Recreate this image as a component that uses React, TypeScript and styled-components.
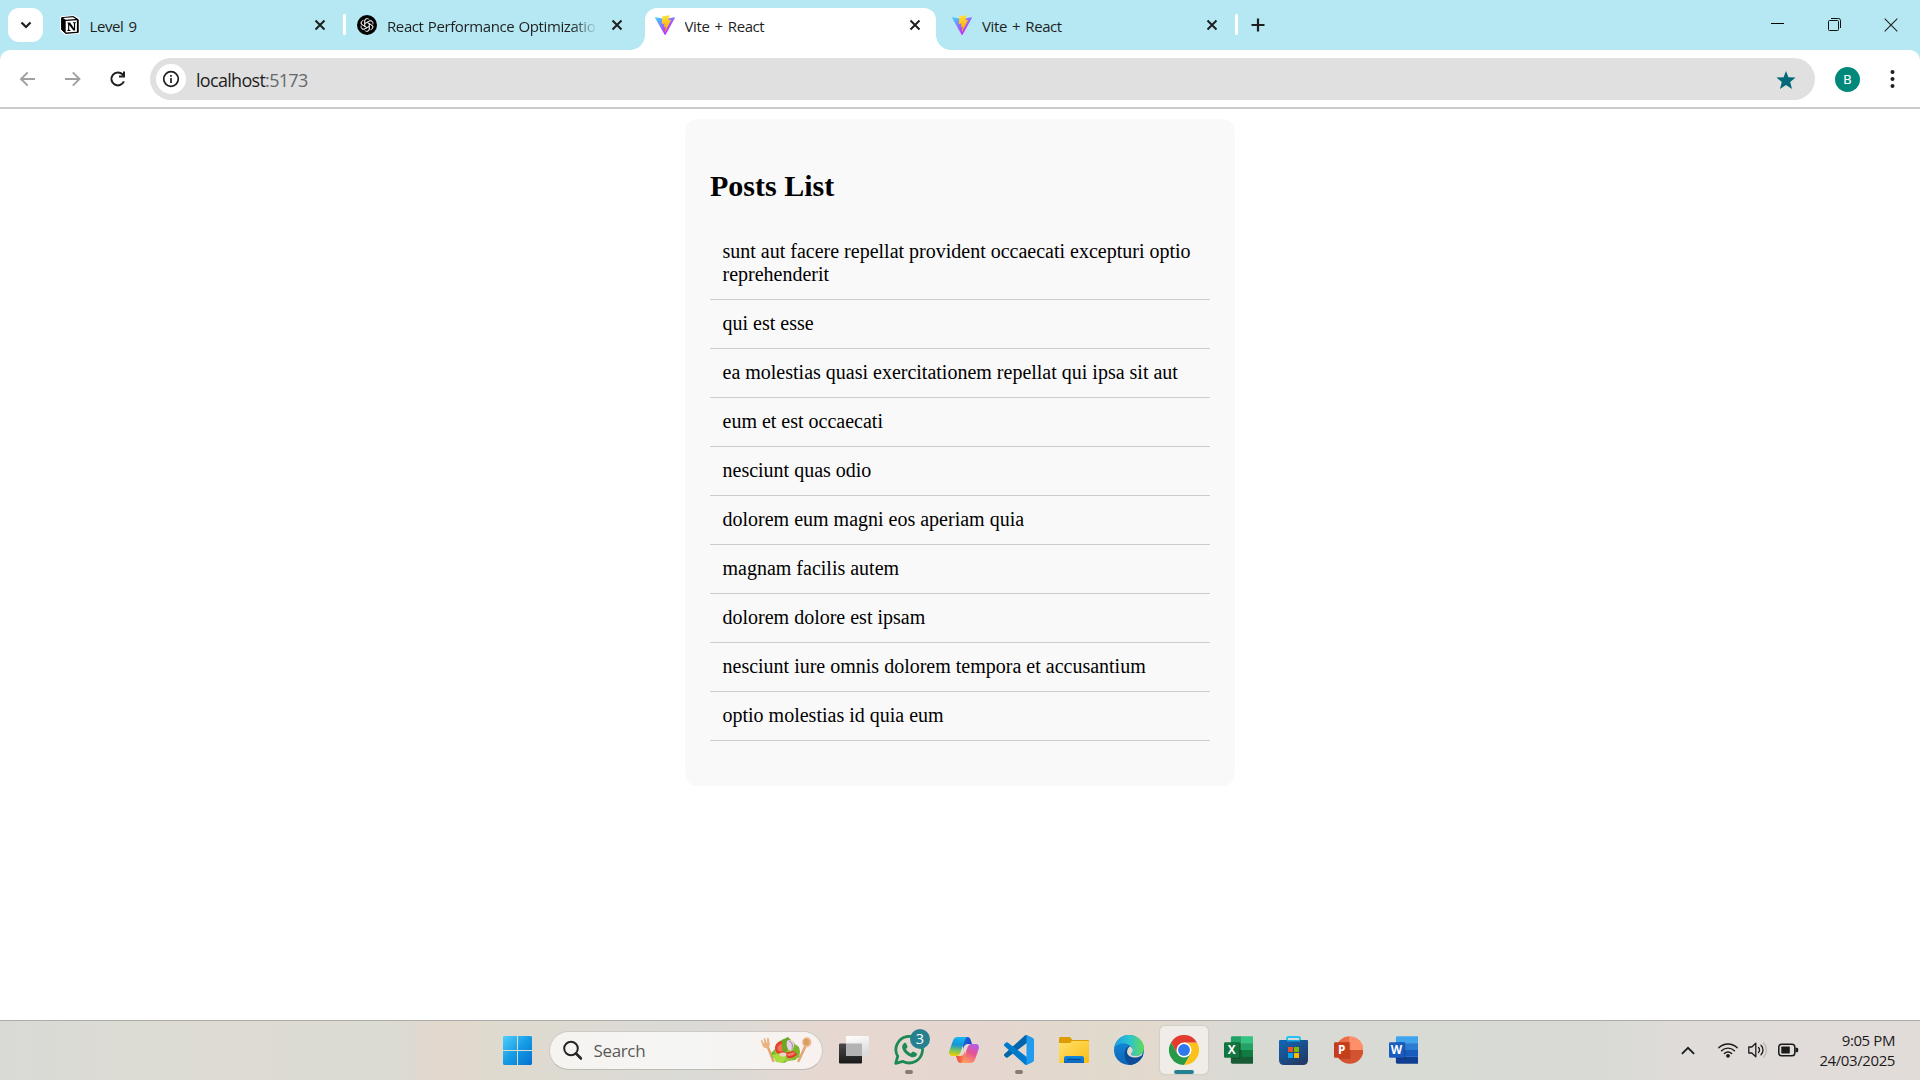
import React from "react";
import styled, { createGlobalStyle, css } from "styled-components";

const GlobalStyle = createGlobalStyle`
  * { box-sizing: border-box; }
  html, body { margin: 0; padding: 0; background: #fff; overflow: hidden; }
`;

const uiFont = css`
  font-family: "Open Sans", "Noto Sans", sans-serif;
`;

const Screen = styled.div`
  width: 1920px;
  height: 1080px;
  display: flex;
  flex-direction: column;
  background: #fff;
  overflow: hidden;
`;

/* ---------- tab strip ---------- */

const TabStrip = styled.header`
  ${uiFont}
  flex: none;
  height: 50px;
  display: flex;
  background: #b5e8f3;
`;

const TabSearch = styled.button`
  width: 35px;
  height: 34px;
  margin: 8px 4px 0 8px;
  padding: 0;
  border: 0;
  border-radius: 11px;
  background: #fff;
  display: flex;
  align-items: center;
  justify-content: center;
`;

const TabBox = styled.div<{ $active?: boolean; $divider?: boolean }>`
  position: relative;
  width: 297.5px;
  height: 50px;
  display: flex;
  align-items: center;
  padding: 0 20px 0 12.5px;
  isolation: isolate;

  ${(p) =>
    p.$active &&
    css`
      &::before {
        content: "";
        position: absolute;
        z-index: -1;
        inset: 7.5px 4px 0 3px;
        border-radius: 12px 12px 0 0;
        background: #fff;
      }
    `}
  ${(p) =>
    p.$divider &&
    css`
      &::after {
        content: "";
        position: absolute;
        right: -1px;
        top: 14px;
        width: 3px;
        height: 21px;
        border-radius: 1px;
        background: #fff;
      }
    `}
`;

const Flare = styled.i<{ $side: "left" | "right" }>`
  position: absolute;
  bottom: 0;
  ${(p) => (p.$side === "left" ? "left: -12px;" : "right: -11px;")}
  width: 15px;
  height: 15px;
  background: radial-gradient(
    circle at ${(p) => (p.$side === "left" ? "0 0" : "100% 0")},
    transparent 14.5px,
    #fff 15.3px
  );
`;

const Favicon = styled.span`
  flex: none;
  width: 20px;
  height: 20px;
  display: flex;
`;

const TabTitle = styled.span<{ $fade?: boolean }>`
  flex: none;
  width: 209px;
  margin: 2px 0 0 10px;
  overflow: hidden;
  white-space: nowrap;
  font-size: 15px;
  line-height: 22px;
  letter-spacing: -0.4px;
  word-spacing: ${(p) => (p.$fade ? 0.8 : 1.6)}px;
  color: #1f1f1f;
  ${(p) => p.$fade && "mask-image: linear-gradient(90deg, #000 185px, transparent 211px);"}
`;

const CloseButton = styled.span`
  margin-left: 15px;
  width: 12px;
  height: 12px;
  display: flex;
`;

const NewTab = styled.span`
  width: 14px;
  height: 50px;
  margin-left: 14px;
  display: flex;
  align-items: center;
`;

const WindowControls = styled.div`
  margin-left: auto;
  padding: 0 22px 0 0;
  display: flex;
  align-items: center;
  gap: 43.5px;
  height: 49px;
`;

/* ---------- toolbar ---------- */

const ToolbarBack = styled.div`
  flex: none;
  background: #b5e8f3;
`;

const Toolbar = styled.nav`
  ${uiFont}
  height: 59px;
  padding: 8px 0 7px 18px;
  display: flex;
  align-items: center;
  background: #fff;
  border-bottom: 2px solid #cbcbcb;
  border-radius: 10px 10px 0 0;
`;

const NavButtons = styled.div`
  flex: none;
  display: flex;
  gap: 25px;
  width: 132px;
`;

const Omnibox = styled.div`
  flex: none;
  width: 1665px;
  height: 42px;
  border-radius: 21px;
  background: #e0e0e0;
  display: flex;
  align-items: center;
  padding: 0 19.5px 0 6px;
`;

const SiteInfo = styled.span`
  width: 30px;
  height: 30px;
  border-radius: 50%;
  background: #fff;
  display: flex;
  align-items: center;
  justify-content: center;
`;

const Address = styled.span`
  flex: 1;
  margin: 2px 0 0 10px;
  font-size: 18px;
  line-height: 24px;
  letter-spacing: -0.7px;
  color: #1f1f1f;
`;

const Port = styled.span`
  color: #66696c;
`;

const Avatar = styled.span`
  flex: none;
  width: 25px;
  height: 25px;
  margin: 0 25px 0 20px;
  border-radius: 50%;
  background: #00897b;
  color: #fff;
  font: 400 13.5px/25px Roboto, sans-serif;
  text-align: center;
`;

/* ---------- page ---------- */

const Page = styled.main`
  flex: 1;
  padding-top: 10px;
  font-family: "Liberation Serif", "Times New Roman", serif;
  color: #000;
`;

const Card = styled.section`
  width: 550px;
  margin: 0 auto;
  padding: 25px;
  border-radius: 12.5px;
  background: #f9f9f9;
`;

const Heading = styled.h2`
  margin: 25px 0;
  font-size: 30px;
  line-height: 34px;
`;

const Posts = styled.ul`
  margin: 0 0 20px;
  padding: 0;
  list-style: none;
`;

const Post = styled.li`
  padding: 11.5px 12.5px 13.5px;
  border-bottom: 1px solid #ccc;
  font-size: 20px;
  line-height: 23px;
`;

/* ---------- taskbar ---------- */

const Taskbar = styled.footer`
  ${uiFont}
  flex: none;
  height: 60px;
  display: flex;
  border-top: 1px solid #aeaca8;
  background: linear-gradient(
    90deg,
    #d9dad6 0,
    #dcdbd4 120px,
    #dddbd3 230px,
    #dbdad3 390px,
    #e2d8cd 445px,
    #dfdacf 500px,
    #dadad6 690px,
    #e6d8d1 830px,
    #e6d6d0 960px,
    #e0dacd 1110px,
    #e3d9ce 1150px,
    #dadad5 1240px,
    #d8dad4 1440px,
    #d9dad5 1600px,
    #e0dcd9 1690px,
    #e2dcd9 1920px
  );
`;

const StartArea = styled.div`
  width: 831px;
  padding-left: 503px;
  display: flex;
  align-items: center;
  gap: 17px;
`;

const SearchPill = styled.div`
  width: 274px;
  height: 39px;
  margin-top: -1px;
  padding: 0 10px 0 12.5px;
  border-radius: 20px;
  border: 1px solid #cfcac5;
  border-bottom-color: #bdb9b4;
  background: linear-gradient(90deg, #f6f4f1, #f5f5f3 55%, #f8f1ef);
  display: flex;
  align-items: center;
`;

const SearchText = styled.span`
  flex: 1;
  margin-left: 12px;
  font-size: 17px;
  letter-spacing: -0.35px;
  color: #5b5957;
`;

const Apps = styled.div`
  display: flex;
  align-items: center;
  gap: 7px;
  padding-bottom: 1px;
  margin-left: -1px;
`;

const AppButton = styled.div<{ $active?: boolean }>`
  position: relative;
  width: 48px;
  height: 48px;
  border-radius: 5px;
  display: flex;
  align-items: center;
  justify-content: center;
  ${(p) =>
    p.$active &&
    css`
      background: #f0ede8;
      box-shadow: 0 0 1px 0.5px #d2cec8;
    `}
`;

const Indicator = styled.i<{ $active?: boolean }>`
  position: absolute;
  bottom: 0;
  left: ${(p) => (p.$active ? 14 : 20)}px;
  width: ${(p) => (p.$active ? 20 : 8)}px;
  height: 4px;
  border-radius: 2px;
  background: ${(p) => (p.$active ? "#26808f" : "#857b78")};
`;

const Badge = styled.b`
  position: absolute;
  left: 25px;
  top: 3px;
  width: 20px;
  height: 20px;
  border-radius: 50%;
  background: #26808f;
  color: #fff;
  font-weight: 400;
  font-size: 14.5px;
  line-height: 20px;
  text-align: center;
`;

const Tray = styled.div`
  margin-left: auto;
  padding: 0 25px 1px 0;
  display: flex;
  align-items: center;
`;

const TrayIcons = styled.div`
  display: flex;
  align-items: center;
  gap: 10px;
  margin: 0 20px 0 23px;
`;

const Clock = styled.div`
  width: 76px;
  display: flex;
  flex-direction: column;
  align-items: flex-end;
  white-space: nowrap;
  font-size: 15px;
  line-height: 20px;
  letter-spacing: -0.4px;
  color: #1b1b1b;
`;

/* ---------- icons ---------- */

const CloseX = () => (
  <svg width="12" height="12" viewBox="0 0 12 12">
    <path d="M1.500 1.500l9 9m0-9l-9 9" stroke="#1f1f1f" strokeWidth="2" />
  </svg>
);

const NotionIcon = () => (
  <svg width="20" height="20" viewBox="0 0 20 20">
    <path d="M1 2.200L13.500 1l5.500 3v14L5.500 19.200 1 15.500z" fill="#fff" stroke="#fff" strokeWidth="1.500" strokeLinejoin="round" />
    <path d="M1.600 2.700L13.400 1.600l4.800 3v12.800L5.700 18.400 1.600 14.600z" fill="#000" stroke="#000" strokeLinejoin="round" />
    <path d="M3.200 3.100l9.800-.8 2.700 1.700-10.200.7z" fill="#fff" />
    <path d="M5.700 5.900l11.200-.7v11.500l-11.200.7z" fill="#fff" />
    <path d="M7.500 7.500h2.600l3.800 5.800V8.300l-1-.2v-.8h3v.8l-.8.2v7.300h-1.700L9.200 9.900v4.900l1.200.3v.8H7.400v-.8l.7-.3V8.500l-.7-.2z" fill="#000" />
  </svg>
);

const ChatIcon = () => (
  <svg width="20" height="20" viewBox="0 0 20 20">
    <circle cx="10" cy="10" r="10" fill="#000" />
    <g fill="none" stroke="#e8e8e8" strokeWidth="0.8">
      {[0, 60, 120, 180, 240, 300].map((a) => (
        <path key={a} transform={`rotate(${a} 10 10)`} d="M7.700 11.300V6.200a2.600 2.600 0 0 1 4.700-1.500M7.700 8.700l4.600-2.700a2.600 2.600 0 0 1 3.500 1" />
      ))}
    </g>
  </svg>
);

const ViteIcon = ({ id }: { id: string }) => (
  <svg width="20" height="20" viewBox="0 0 256 257">
    <defs>
      <linearGradient id={`${id}a`} x1="-.828%" x2="57.636%" y1="7.652%" y2="78.411%">
        <stop offset="0%" stopColor="#41D1FF" />
        <stop offset="100%" stopColor="#BD34FE" />
      </linearGradient>
      <linearGradient id={`${id}b`} x1="43.376%" x2="50.316%" y1="2.242%" y2="89.030%">
        <stop offset="0%" stopColor="#FFEA83" />
        <stop offset="8.333%" stopColor="#FFDD35" />
        <stop offset="100%" stopColor="#FFA800" />
      </linearGradient>
    </defs>
    <path fill={`url(#${id}a)`} d="M255.153 37.938L134.897 252.976c-2.483 4.440-8.862 4.466-11.382.048L.875 37.958c-2.746-4.814 1.371-10.646 6.827-9.670l120.385 21.517a6.537 6.537 0 0 0 2.322-.004l117.867-21.483c5.438-.991 9.574 4.796 6.877 9.620Z" />
    <path fill={`url(#${id}b)`} d="M185.432.063L96.440 17.501a3.268 3.268 0 0 0-2.634 3.014l-5.474 92.456a3.268 3.268 0 0 0 3.997 3.378l24.777-5.718c2.318-.535 4.413 1.507 3.936 3.838l-7.361 36.047c-.495 2.426 1.782 4.500 4.151 3.780l15.304-4.649c2.372-.720 4.652 1.360 4.150 3.788l-11.698 56.621c-.732 3.542 3.979 5.473 5.943 2.437l1.313-2.028 72.516-144.720c1.215-2.423-.880-5.186-3.540-4.672l-25.505 4.922c-2.396.462-4.435-1.770-3.759-4.114l16.646-57.705c.677-2.350-1.370-4.583-3.769-4.113Z" />
  </svg>
);

const StartIcon = () => (
  <svg width="29" height="29" viewBox="0 0 29 29">
    <defs>
      <linearGradient id="start" x1="0" y1="0" x2="29" y2="29" gradientUnits="userSpaceOnUse">
        <stop offset="0" stopColor="#4fd0fb" />
        <stop offset=".5" stopColor="#159be4" />
        <stop offset="1" stopColor="#0370cf" />
      </linearGradient>
    </defs>
    <path fill="url(#start)" d="M1 0h13v14H0V1zM15 0h13l1 1v13H15zM0 15h14v14H1l-1-1zM15 15h14v13l-1 1H15z" />
  </svg>
);

const SaladIcon = () => (
  <svg width="52" height="28" viewBox="0 0 52 28">
    <path d="M7.500 10l5.800 15" stroke="#e3a671" strokeWidth="2.400" strokeLinecap="round" />
    <path d="M.8 4.500q.8-1.200 1.600 0l1.300 3 .6-.2-.6-4.500q.8-1.500 1.700 0l1.200 4 .6-.2-.2-4.300q.9-1.300 1.700 0L9.800 8q.3 3-2.400 4.200-3 .6-4.600-2z" fill="#e9b382" />
    <path d="M45 11l-6.500 14" stroke="#e3a671" strokeWidth="2.600" strokeLinecap="round" />
    <ellipse cx="46.800" cy="6.300" rx="4.600" ry="5" fill="#ebb887" />
    <ellipse cx="46.300" cy="6" rx="2.800" ry="3.200" fill="#d99d66" />
    <path d="M11 17l5-5 2 12-6-3zM18 21l10 1 7-5 5 3-5 4-7 1-4 2-5-1z" fill="#7fb92e" />
    <circle cx="26" cy="14" r="11" fill="#a5cf45" />
    <path d="M15 11l9-8 6 1 9 8-2 9-8 3-13-5z" fill="#8fc335" />
    <path d="M15 12c0-5 5-8 10-7l4 7-6 7c-4 0-8-2-8-7z" fill="#e5432f" />
    <path d="M17.500 11.500c1-3 4-4 7-4l1 4-4 4c-2 0-4-1-4-4z" fill="#f47458" />
    <path d="M24 17l14-3c1 5-5 9-10 8z" fill="#dd3b2a" />
    <path d="M27 18l8-2c0 3-4 4-7 4z" fill="#f57d63" />
    <path d="M22 4l6-3 3 3-3 9-4 4-2-4z" fill="#6aa822" />
    <path d="M27 5c4-3 8 0 7 7l-4 3c-3-2-4-6-3-10z" fill="#e6d3e4" />
    <path d="M29 5c3 1 4 4 3 8" stroke="#ae80ad" fill="none" />
    <path d="M34 9c6-1 7 7 5 11l-6-6z" fill="#7cb52b" />
    <path d="M12 19l10-2 4 4-3 6-7-1z" fill="#a9dc3e" />
    <ellipse cx="23" cy="18.500" rx="3.500" ry="2" fill="#eed6cd" />
  </svg>
);

const TaskViewIcon = () => (
  <svg width="30" height="30" viewBox="0 0 30 30">
    <defs>
      <linearGradient id="tv1" x2="0" y2="1"><stop stopColor="#4a4a4a" /><stop offset="1" stopColor="#191919" /></linearGradient>
      <linearGradient id="tv2" x2=".3" y2="1"><stop stopColor="#fff" /><stop offset="1" stopColor="#dcdcdc" /></linearGradient>
    </defs>
    <rect x="0" y="8.500" width="23" height="20" rx="1" fill="url(#tv1)" />
    <rect x="7" y="1" width="23" height="20" rx="1" fill="url(#tv2)" />
    <path d="M7 8.500h16V21H8q-1 0-1-1z" fill="#b3b3b3" />
  </svg>
);

const WhatsAppIcon = () => (
  <svg width="30" height="30" viewBox="0 0 30 30">
    <path d="M1.700 28.300l2-7A13.300 13.300 0 1 1 9 26.400z" fill="none" stroke="#1c8a55" strokeWidth="2.800" strokeLinejoin="round" />
    <path d="M10 8.300c.7-.7 1.800-.6 2.200.2l1.200 2.800c.2.500 0 1-.3 1.400l-1.100 1.400c1 2 2.700 3.500 4.800 4.400l1.400-1.400c.4-.4.900-.5 1.400-.3l2.600 1.300c.8.400 1 1.400.5 2.200-1.300 2-3.500 2.400-5.600 1.600-4.400-1.500-7.500-4.500-8.800-8.400-.6-2 .3-4 1.700-5.200z" fill="#1c8a55" />
  </svg>
);

const CopilotIcon = () => (
  <svg width="30" height="28" viewBox="0 0 30 28">
    <defs>
      <linearGradient id="cp1" x1=".3" x2=".2" y2="1"><stop stopColor="#18b5f0" /><stop offset=".4" stopColor="#1595d6" /><stop offset=".7" stopColor="#7bc558" /><stop offset="1" stopColor="#f6d000" /></linearGradient>
      <linearGradient id="cp2" x1=".8" x2=".3" y2="1"><stop stopColor="#b05cf0" /><stop offset=".45" stopColor="#e75291" /><stop offset="1" stopColor="#ffa25b" /></linearGradient>
      <linearGradient id="cp3" x2="1" y2=".6"><stop stopColor="#1e70e8" /><stop offset="1" stopColor="#1c3fbd" /></linearGradient>
      <linearGradient id="cp4" x2="1"><stop stopColor="#f0483e" /><stop offset="1" stopColor="#fb8b50" /></linearGradient>
    </defs>
    <path d="M14 1h4.500c2 0 2.800 1.500 3.500 4l1 3h-4c-3 0-4 2-5 5z" fill="url(#cp3)" />
    <path d="M16 27h-4.500c-2 0-2.800-1.500-3.500-4l-1-3h4c3 0 4-2 5-5z" fill="url(#cp4)" />
    <path d="M8.500 1H19c-2 0-2.800 2-3.500 4l-4 11.500c-1 2.500-2 3.500-4 3.500H3c-2.500 0-3.500-2.300-2.700-5L4 4.500C4.800 2 6.500 1 8.500 1z" fill="url(#cp1)" />
    <path d="M21.500 27H11c2 0 2.800-2 3.500-4l4-11.500c1-2.500 2-3.500 4-3.500H27c2.500 0 3.500 2.300 2.700 5L26 23.500c-.8 2.500-2.500 3.500-4.500 3.500z" fill="url(#cp2)" />
  </svg>
);

const VSCodeIcon = () => (
  <svg width="30" height="30" viewBox="0 0 100 100">
    <path fill="#0065a9" d="M96.460 10.800L75.860.880a6.230 6.230 0 0 0-7.110 1.210L1.300 63.580a4.170 4.170 0 0 0 .01 6.170l5.510 5a4.170 4.170 0 0 0 5.320.240L93.370 13.400C96.090 11.300 100 13.300 100 16.700v-.240a6.250 6.250 0 0 0-3.540-5.630z" />
    <path fill="#007acc" d="M96.460 89.200l-20.600 9.920a6.230 6.230 0 0 1-7.110-1.210L1.300 36.420a4.170 4.170 0 0 1 .01-6.170l5.510-5a4.170 4.170 0 0 1 5.320-.240l81.230 61.600c2.720 2.080 6.630.130 6.630-3.290v.240a6.250 6.250 0 0 1-3.540 5.630z" />
    <path fill="#1f9cf0" d="M75.860 99.130a6.230 6.230 0 0 1-7.110-1.210c2.310 2.310 6.250.670 6.250-2.590V4.670c0-3.260-3.940-4.900-6.250-2.590A6.230 6.230 0 0 1 75.860.870l20.600 9.910A6.250 6.250 0 0 1 100 16.410v67.170a6.250 6.250 0 0 1-3.540 5.630z" />
  </svg>
);

const FolderIcon = () => (
  <svg width="30" height="26" viewBox="0 0 30 26">
    <defs>
      <linearGradient id="fd1" x2="1" y2="1"><stop stopColor="#ffe06b" /><stop offset="1" stopColor="#fdbd14" /></linearGradient>
      <linearGradient id="fd2" x2="0" y2="1"><stop stopColor="#1389dd" /><stop offset="1" stopColor="#0a66bd" /></linearGradient>
    </defs>
    <path d="M0 1.500Q0 0 1.500 0h8.700q.8 0 1.300.6L13.300 3H29q1 0 1 1v10H0z" fill="#dd9c05" />
    <path d="M0 6h9.800q1 0 1.700-.6L13 4h16q1 0 1 1v20q0 1-1 1H1q-1 0-1-1z" fill="url(#fd1)" />
    <path d="M5 26v-5q0-2 2-2h16q2 0 2 2v5z" fill="url(#fd2)" />
    <path d="M8.500 22.500h13" stroke="#064a94" strokeWidth="1.300" />
  </svg>
);

const EdgeIcon = () => (
  <svg width="30" height="30" viewBox="0 0 30 30">
    <defs>
      <linearGradient id="ed1" x1="0" y1=".5" x2="1" y2=".5"><stop stopColor="#1b9de2" /><stop offset=".5" stopColor="#2bc3d2" /><stop offset="1" stopColor="#62da55" /></linearGradient>
      <linearGradient id="ed2" x2="0" y2="1"><stop stopColor="#1490df" /><stop offset="1" stopColor="#0d63b5" /></linearGradient>
    </defs>
    <circle cx="15" cy="15" r="15" fill="url(#ed2)" />
    <path d="M0 14C.8 6 7 0 15 0c9 0 15 6.500 15 13 0 5-4 8-8.500 8-3.500 0-4.500-1.500-4-2.500 1.700-2 1.500-3.500 1.200-4.500C17.700 10.500 13.500 8.500 9.500 8.500 5 8.500 1.500 10.500 0 14z" fill="url(#ed1)" />
    <path d="M10.500 19c0-4 2.500-7.500 5-8 2 .8 3.300 2.500 3.300 4.500s-1.600 2.500-1.300 3.700c.5 1.900 3 2.600 5.200 2.300 2-.2 4-1 5.300-1.800.8-.4 1.300.2.900 1C26.500 25.500 21.500 29.600 16.500 30c-3.500-1.500-6-6-6-11z" fill="#0c4c97" />
    <path d="M18.700 14c.7 2-.2 3-1.200 4.500-.7 1.200.8 2.500 4 2.500 2.800 0 5.500-1.300 7-3.300-.3 2-1 3-1.800 3.200-4.700 2.300-10.200 2-12.500-.9-2.200-3-.8-7 1.800-8.800 1.200.6 2.200 1.500 2.700 2.800z" fill="#dfdacf" />
  </svg>
);

const ChromeIcon = () => (
  <svg width="30" height="30" viewBox="0 0 48 48">
    <path d="M24 12h20.800A24 24 0 0 1 24 48l10.400-18z" fill="#fcc21b" />
    <path d="M3.200 12A24 24 0 0 1 44.800 12H24L13.600 30z" fill="#e33b2e" />
    <path d="M3.200 12l10.400 18h20.800L24 48A24 24 0 0 1 3.200 12z" fill="#269a47" />
    <circle cx="24" cy="24" r="12" fill="#fff" />
    <circle cx="24" cy="24" r="9.500" fill="#3079ec" />
  </svg>
);

const Letter = styled.text`
  font-family: "Open Sans", sans-serif;
  font-weight: 700;
  font-size: 12px;
  fill: #fff;
  text-anchor: middle;
`;

const OfficeSvg = styled.svg.attrs({ viewBox: "0 0 30 28" })`
  width: 29.5px;
  height: 28px;
  margin-right: 1px;
`;

const ExcelIcon = () => (
  <OfficeSvg>
    <path d="M7 1.500Q7 0 8.500 0H18v7H7z" fill="#21a366" />
    <path d="M18 0h10.500Q30 0 30 1.500V7H18z" fill="#33c481" />
    <path d="M7 7h11v7H7z" fill="#107c41" />
    <path d="M18 7h12v7H18z" fill="#21a366" />
    <path d="M7 14h23v12.500q0 1.500-1.500 1.500h-20Q7 28 7 26.500z" fill="#185c37" />
    <path d="M18 14h12v7H18z" fill="#107c41" />
    <path d="M7 6h9.500v17H7z" fill="#0b4527" opacity=".45" />
    <rect y="6" width="15.500" height="16" rx="1.300" fill="#12753e" />
    <Letter x="7.700" y="18.400">X</Letter>
  </OfficeSvg>
);

const StoreSvg = styled.svg`
  margin-right: 1px;
`;

const StoreIcon = () => (
  <StoreSvg width="29" height="29" viewBox="0 0 29 29">
    <defs><linearGradient id="st" x2=".7" y2="1"><stop stopColor="#0f68b8" /><stop offset="1" stopColor="#223a66" /></linearGradient></defs>
    <path d="M8 6V2.500Q8 1 9.500 1h10Q21 1 21 2.500V6" fill="none" stroke="#28c2f4" strokeWidth="2" />
    <path d="M0 5q0-1 1-1h27q1 0 1 1v19q0 5-5 5H5q-5 0-5-5z" fill="url(#st)" />
    <path d="M8 4h13v1.500H8z" fill="#1ba3dd" />
    <path d="M9 11h5v5H9z" fill="#f25022" /><path d="M15 11h5v5h-5z" fill="#7fba00" />
    <path d="M9 17h5v5H9z" fill="#00a4ef" /><path d="M15 17h5v5h-5z" fill="#ffb900" />
  </StoreSvg>
);

const PowerPointIcon = () => (
  <OfficeSvg>
    <path d="M16 0v14H2A14 14 0 0 1 16 0z" fill="#ed6c47" />
    <path d="M16 0a14 14 0 0 1 14 14H16z" fill="#ff8f6b" />
    <path d="M2 14h28a14 14 0 0 1-28 0z" fill="#d35230" />
    <path d="M5 6h11.500v17H5z" fill="#8f2a12" opacity=".4" />
    <rect y="6" width="15.500" height="16" rx="1.300" fill="#c43e1c" />
    <Letter x="7.800" y="18.400">P</Letter>
  </OfficeSvg>
);

const WordIcon = () => (
  <OfficeSvg>
    <path d="M7 1.500Q7 0 8.500 0h20Q30 0 30 1.500V7H7z" fill="#41a5ee" />
    <path d="M7 7h23v7H7z" fill="#2b7cd3" />
    <path d="M7 14h23v7H7z" fill="#185abd" />
    <path d="M7 21h23v5.500q0 1.500-1.500 1.500h-20Q7 28 7 26.500z" fill="#103f91" />
    <path d="M7 6h9.500v17H7z" fill="#0b2f70" opacity=".45" />
    <rect y="6" width="15.500" height="16" rx="1.300" fill="#1a5bbf" />
    <Letter x="7.700" y="18.400">W</Letter>
  </OfficeSvg>
);

const Tab = ({ icon, title, active, divider, fade }: {
  icon: React.ReactNode; title: string; active?: boolean; divider?: boolean; fade?: boolean;
}) => (
  <TabBox $active={active} $divider={divider}>
    {active && <><Flare $side="left" /><Flare $side="right" /></>}
    <Favicon>{icon}</Favicon>
    <TabTitle $fade={fade}>{title}</TabTitle>
    <CloseButton><CloseX /></CloseButton>
  </TabBox>
);

const posts = [
  "sunt aut facere repellat provident occaecati excepturi optio reprehenderit",
  "qui est esse",
  "ea molestias quasi exercitationem repellat qui ipsa sit aut",
  "eum et est occaecati",
  "nesciunt quas odio",
  "dolorem eum magni eos aperiam quia",
  "magnam facilis autem",
  "dolorem dolore est ipsam",
  "nesciunt iure omnis dolorem tempora et accusantium",
  "optio molestias id quia eum",
];

export default function App() {
  return (
    <Screen>
      <GlobalStyle />
      <TabStrip>
        <TabSearch>
          <svg width="12" height="8" viewBox="0 0 12 8"><path d="M1.500 1.500L6 6l4.500-4.500" fill="none" stroke="#1f1f1f" strokeWidth="2.200" /></svg>
        </TabSearch>
        <Tab icon={<NotionIcon />} title="Level 9" divider />
        <Tab icon={<ChatIcon />} title="React Performance Optimization" fade />
        <Tab icon={<ViteIcon id="v1" />} title="Vite + React" active />
        <Tab icon={<ViteIcon id="v2" />} title="Vite + React" divider />
        <NewTab>
          <svg width="14" height="14" viewBox="0 0 14 14"><path d="M7 .5v13M.5 7h13" stroke="#1f1f1f" strokeWidth="2.200" /></svg>
        </NewTab>
        <WindowControls>
          <svg width="13" height="13" viewBox="0 0 13 13"><path d="M0 5.500h13" stroke="#000" /></svg>
          <svg width="13" height="13" viewBox="0 0 13 13"><g fill="none" stroke="#111"><rect x=".5" y="2.500" width="10" height="10" rx="1" /><path d="M3 .5h7.500q2 0 2 2V10" /></g></svg>
          <svg width="14" height="14" viewBox="0 0 14 14"><path d="M.7.7l12.600 12.600m0-12.600L.7 13.300" stroke="#222" strokeWidth="1.100" /></svg>
        </WindowControls>
      </TabStrip>

      <ToolbarBack>
        <Toolbar>
          <NavButtons>
            <svg width="20" height="20" viewBox="0 0 20 20"><path d="M17 10H3.500M9.700 3.300L3 10l6.700 6.700" fill="none" stroke="#a0a0a0" strokeWidth="1.900" /></svg>
            <svg width="20" height="20" viewBox="0 0 20 20"><path d="M2 10h14.500M9.800 3.300l6.700 6.700-6.700 6.700" fill="none" stroke="#a0a0a0" strokeWidth="1.900" /></svg>
            <svg width="20" height="20" viewBox="0 0 20 20"><path d="M15.900 12.400A6.500 6.500 0 1 1 14.700 5.500l1.200 1.400" fill="none" stroke="#1f1f1f" strokeWidth="2" /><path d="M17 2.500v6h-6v-2h4v-4z" fill="#1f1f1f" /></svg>
          </NavButtons>
          <Omnibox>
            <SiteInfo>
              <svg width="18" height="18" viewBox="0 0 18 18"><circle cx="9" cy="9" r="7.300" fill="none" stroke="#1f1f1f" strokeWidth="1.700" /><path d="M9 8v5M9 5v1.800" stroke="#1f1f1f" strokeWidth="1.700" /></svg>
            </SiteInfo>
            <Address>localhost<Port>:5173</Port></Address>
            <svg width="20" height="22" viewBox="0 0 20 22"><path d="M10 3l2.400 6.200 7.200.3-5.400 4.400 1.800 7-6-3.900-6 3.900 1.800-7L.4 9.500l7.200-.3z" fill="#006877" /></svg>
          </Omnibox>
          <Avatar>B</Avatar>
          <svg width="15" height="20" viewBox="0 0 15 20"><g fill="#1f1f1f"><circle cx="7.500" cy="3" r="2" /><circle cx="7.500" cy="10" r="2" /><circle cx="7.500" cy="17" r="2" /></g></svg>
        </Toolbar>
      </ToolbarBack>

      <Page>
        <Card>
          <Heading>Posts List</Heading>
          <Posts>{posts.map((p) => <Post key={p}>{p}</Post>)}</Posts>
        </Card>
      </Page>

      <Taskbar>
        <StartArea>
          <StartIcon />
          <SearchPill>
            <svg width="19" height="20" viewBox="0 0 19 20"><circle cx="8" cy="8.500" r="6.800" fill="none" stroke="#252525" strokeWidth="2" /><path d="M13 13.500l5 5" stroke="#252525" strokeWidth="2.600" strokeLinecap="round" /></svg>
            <SearchText>Search</SearchText>
            <SaladIcon />
          </SearchPill>
        </StartArea>
        <Apps>
          <AppButton><TaskViewIcon /></AppButton>
          <AppButton><WhatsAppIcon /><Badge>3</Badge><Indicator /></AppButton>
          <AppButton><CopilotIcon /></AppButton>
          <AppButton><VSCodeIcon /><Indicator /></AppButton>
          <AppButton><FolderIcon /></AppButton>
          <AppButton><EdgeIcon /></AppButton>
          <AppButton $active><ChromeIcon /><Indicator $active /></AppButton>
          <AppButton><ExcelIcon /></AppButton>
          <AppButton><StoreIcon /></AppButton>
          <AppButton><PowerPointIcon /></AppButton>
          <AppButton><WordIcon /></AppButton>
        </Apps>
        <Tray>
          <svg width="14" height="9" viewBox="0 0 14 9"><path d="M.9 7.800l6.100-6 6.100 6" fill="none" stroke="#1b1b1b" strokeWidth="1.800" /></svg>
          <TrayIcons>
            <svg width="20" height="16" viewBox="0 0 20 16">
              <g fill="none" stroke="#1b1b1b" strokeWidth="1.400" strokeLinecap="round"><path d="M.8 5.800a13 13 0 0 1 18.400 0M3.600 8.800a9 9 0 0 1 12.800 0M6.400 11.500a5.100 5.100 0 0 1 7.200 0" /></g>
              <circle cx="10" cy="13.800" r="1.900" fill="#1b1b1b" />
            </svg>
            <svg width="20" height="18" viewBox="0 0 20 18">
              <g fill="none" strokeWidth="1.300" strokeLinecap="round"><path d="M.8 6v6h3l4 3.800V2.200L3.800 6z" stroke="#1b1b1b" strokeLinejoin="round" /><path d="M10.500 6.500a3.500 3.500 0 0 1 0 5M13 4.300a6.500 6.500 0 0 1 0 9.400" stroke="#1b1b1b" /><path d="M15.500 2a9.800 9.800 0 0 1 0 14" stroke="#bbb8b5" /></g>
            </svg>
            <svg width="21" height="14" viewBox="0 0 21 14">
              <rect x=".8" y="1.300" width="16" height="11.400" rx="2.800" fill="none" stroke="#1b1b1b" strokeWidth="1.500" /><rect x="3.300" y="3.600" width="8.500" height="6.800" rx=".6" fill="#1b1b1b" /><path d="M17.500 4.700h1.200q1.500 0 1.500 1.300v2q0 1.300-1.500 1.300h-1.200z" fill="#1b1b1b" />
            </svg>
          </TrayIcons>
          <Clock><span>9:05 PM</span><span>24/03/2025</span></Clock>
        </Tray>
      </Taskbar>
    </Screen>
  );
}
